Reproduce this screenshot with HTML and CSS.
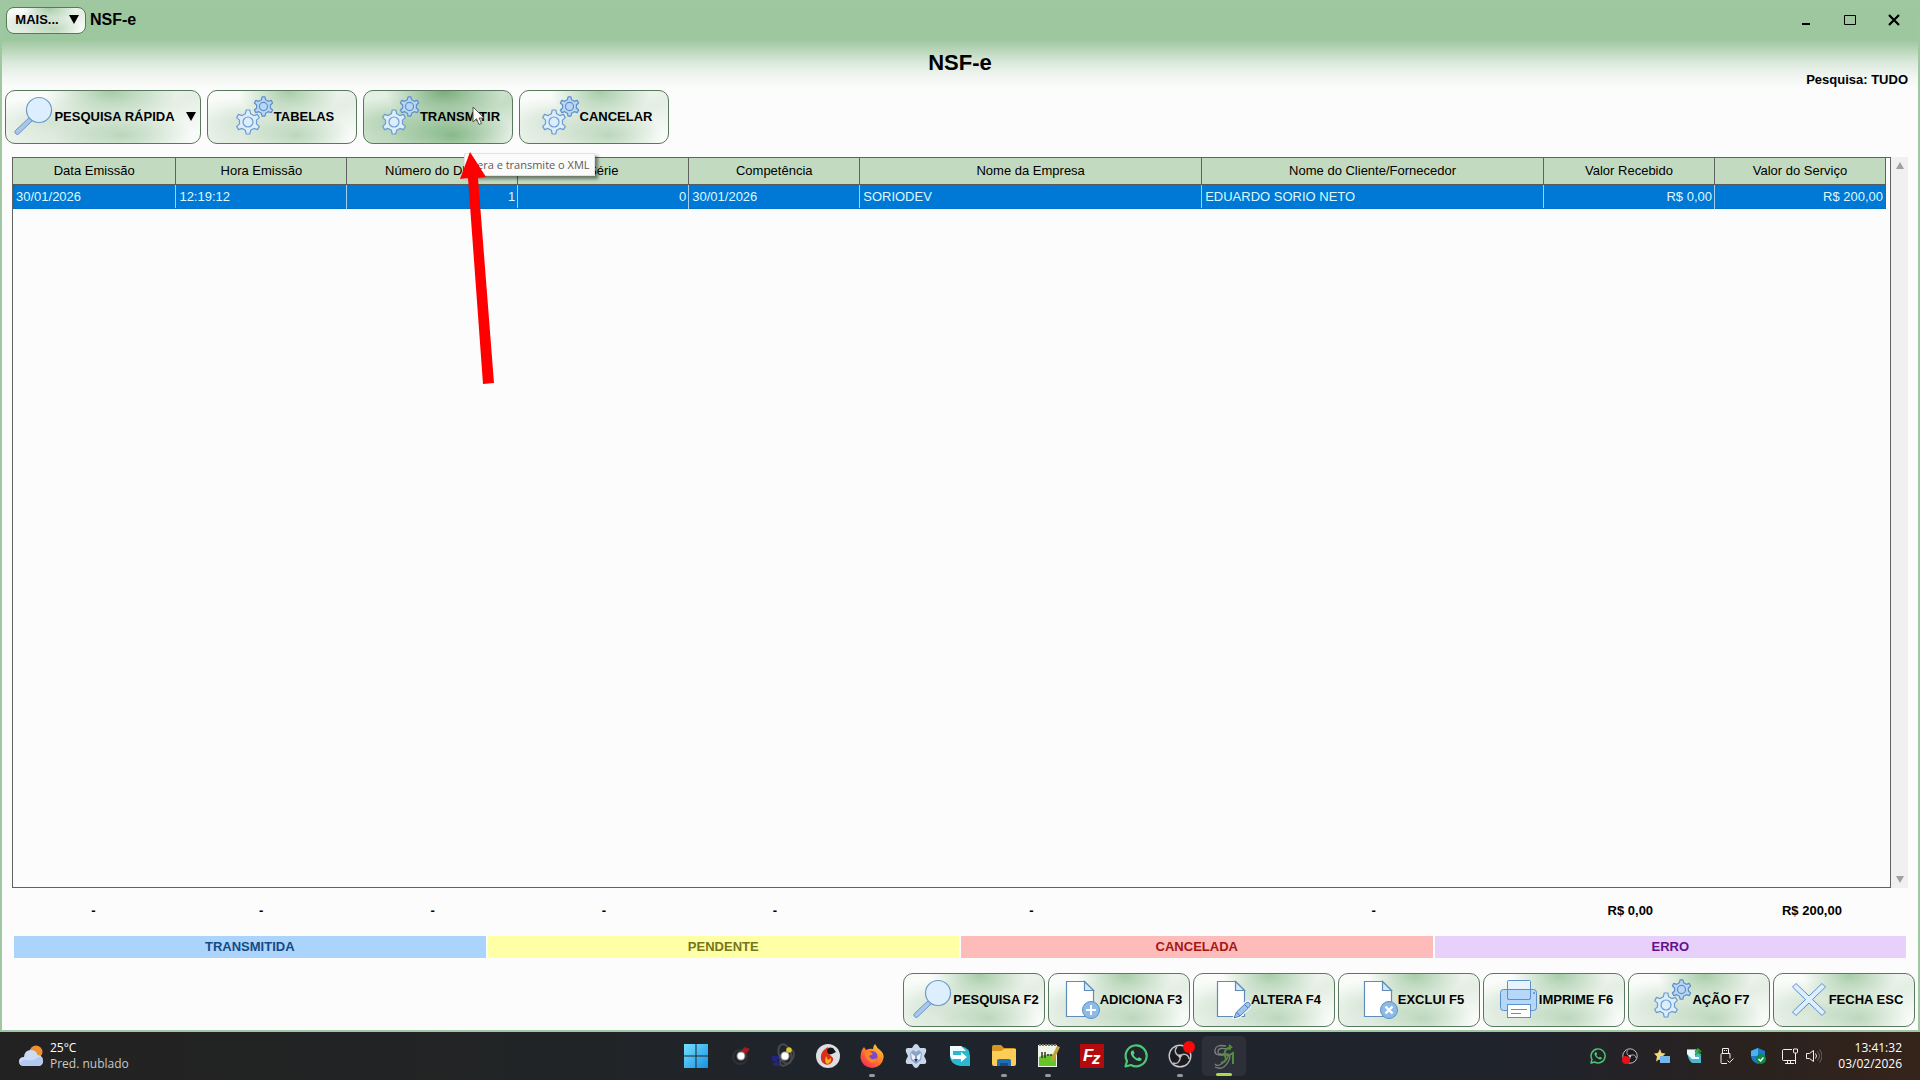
FILE: index.html
```html
<!DOCTYPE html>
<html lang="pt-BR">
<head>
    <meta charset="UTF-8">
    <meta name="viewport" content="width=device-width, initial-scale=1.0">
    <title>NSF-e</title>
    <link rel="stylesheet" href="styles.css">
</head>
<body>
    <!-- Shared icons -->
    <svg class="sprite" aria-hidden="true">
        <symbol id="gear" viewBox="-13 -13 26 26">
            <path d="M-2.6-8.3L-1.8-12H1.8L2.6-8.3L5.9-6.4L9.5-7.6L11.3-4.4L8.5-1.9V1.9L11.3 4.4L9.5 7.6L5.9 6.4L2.6 8.3L1.8 12H-1.8L-2.6 8.3L-5.9 6.4L-9.5 7.6L-11.3 4.4L-8.5 1.9V-1.9L-11.3-4.4L-9.5-7.6L-5.9-6.4Z" stroke-linejoin="round"/>
            <circle r="5"/>
        </symbol>
        <symbol id="gears" viewBox="0 0 44 40">
            <use href="#gear" x="5" y="13" width="26" height="26" fill="#dcedfc" stroke="#6c9cd0" stroke-width="1.2"/>
            <use href="#gear" x="23" y="0" width="21" height="21" fill="#b9d7f4" stroke="#5d8fca" stroke-width="1.5"/>
        </symbol>
        <symbol id="search" viewBox="0 0 44 40">
            <path d="M20.5 20.5L23.5 23.5L8.5 38Q7 39 5.5 37.5T5.5 34.5Z" fill="#a6c8ec" stroke="#6b93bf"/>
            <circle cx="29" cy="14" r="12.5" fill="#ddeefe" stroke="#6b9ac4" stroke-width="1.2"/>
        </symbol>
        <symbol id="file" viewBox="0 0 44 40">
            <path d="M10.5 2.5H28.5L37.5 11.5V37.5H10.5Z" fill="#fff" stroke="#5f8db8" stroke-width="1.2"/>
            <path d="M28.5 2.5V11.5H37.5Z" fill="#d5e8fb" stroke="#5f8db8" stroke-width="1.2"/>
        </symbol>
        <symbol id="whatsapp" viewBox="0 0 24 24">
            <path d="M1.5 22.5L3 17A10.5 10.5 0 1 1 7 21Z" fill="none" stroke="#4cc774" stroke-width="2.2" stroke-linejoin="round"/>
            <path d="M8 6.5C6 8 6.5 11 9.5 14S16 18 17.5 16L17.5 14.5L14.8 13.2L13.5 14.6C11.5 13.8 10.2 12.5 9.4 10.6L10.6 9.3L9.5 6.5Z" fill="#58cf80"/>
        </symbol>
        <symbol id="obs" viewBox="0 0 24 24">
            <circle cx="12" cy="12" r="10.8" fill="#1b1b1f" stroke="#c9c9cc" stroke-width="1.4"/>
            <path d="M12 12C7 11 6 6 9 3M12 12C16 8.5 21 11 21 15M12 12C13 17 9 21 5 19" fill="none" stroke="#b9b9bd" stroke-width="1.4"/>
            <circle cx="12" cy="12" r="1.8" fill="#c9c9cc"/>
        </symbol>
    </svg>

    <main class="window">
        <header class="titlebar">
            <button class="btn btn-more" type="button">MAIS... <span class="caret"></span></button>
            <span class="window-name">NSF-e</span>
            <div class="window-controls">
                <button type="button" aria-label="Minimizar"><svg width="12" height="12"><path d="M2 10h8" stroke="#000" stroke-width="2"/></svg></button>
                <button type="button" aria-label="Maximizar"><svg width="12" height="12"><path d="M.5 1.5h11v9H.5z" fill="none" stroke="#000"/></svg></button>
                <button type="button" aria-label="Fechar"><svg width="12" height="12"><path d="M1 1L11 11M11 1L1 11" stroke="#000" stroke-width="2.2"/></svg></button>
            </div>
        </header>

        <div class="heading">
            <h1>NSF-e</h1>
            <p>Pesquisa: TUDO</p>
        </div>

        <nav class="toolbar">
            <button class="btn btn-search" type="button"><svg class="icon"><use href="#search"/></svg>PESQUISA RÁPIDA<span class="caret"></span></button>
            <button class="btn" type="button"><svg class="icon"><use href="#gears"/></svg>TABELAS</button>
            <button class="btn active" type="button" aria-describedby="tip"><svg class="icon"><use href="#gears"/></svg>TRANSMITIR</button>
            <button class="btn" type="button"><svg class="icon"><use href="#gears"/></svg>CANCELAR</button>
        </nav>

        <section class="grid-area">
            <div class="grid-box">
                <table>
                    <colgroup>
                        <col class="col-date"><col class="col-std"><col class="col-std"><col class="col-std"><col class="col-std"><col class="col-wide"><col class="col-wide"><col class="col-std"><col class="col-std">
                    </colgroup>
                    <thead>
                        <tr>
                            <th>Data Emissão</th>
                            <th>Hora Emissão</th>
                            <th>Número do DPS</th>
                            <th>Série</th>
                            <th>Competência</th>
                            <th>Nome da Empresa</th>
                            <th>Nome do Cliente/Fornecedor</th>
                            <th>Valor Recebido</th>
                            <th>Valor do Serviço</th>
                        </tr>
                    </thead>
                    <tbody>
                        <tr class="selected">
                            <td>30/01/2026</td>
                            <td>12:19:12</td>
                            <td class="num">1</td>
                            <td class="num">0</td>
                            <td>30/01/2026</td>
                            <td>SORIODEV</td>
                            <td>EDUARDO SORIO NETO</td>
                            <td class="num">R$ 0,00</td>
                            <td class="num">R$ 200,00</td>
                        </tr>
                    </tbody>
                </table>
            </div>
            <div class="scrollbar"><span class="arrow-up"></span><span class="arrow-down"></span></div>
        </section>

        <div class="totals">
            <span>-</span><span>-</span><span>-</span><span>-</span><span>-</span><span>-</span><span>-</span><span>R$ 0,00</span><span>R$ 200,00</span>
        </div>

        <div class="legend">
            <span class="sent">TRANSMITIDA</span>
            <span class="pending">PENDENTE</span>
            <span class="canceled">CANCELADA</span>
            <span class="error">ERRO</span>
        </div>

        <div class="actions">
            <button class="btn" type="button"><svg class="icon"><use href="#search"/></svg>PESQUISA F2</button>
            <button class="btn" type="button">
                <svg class="icon"><use href="#file"/><circle cx="35" cy="31" r="8.5" fill="#8dbbe8" stroke="#5b8fc7"/><path d="M35 26v10M30 31h10" stroke="#fff" stroke-width="2"/></svg>ADICIONA F3
            </button>
            <button class="btn" type="button">
                <svg class="icon"><use href="#file"/><path d="M27 39L29.5 33L39.5 23.5Q41 22.5 42.5 24T43 27.5L33 37Z" fill="#9cc4ed" stroke="#fff" stroke-width="3"/><path d="M27 39L29.5 33L39.5 23.5Q41 22.5 42.5 24T43 27.5L33 37ZM29.5 33L33 37M37.5 25.5L41 29" fill="#9cc4ed" stroke="#4f7fb5"/></svg>ALTERA F4
            </button>
            <button class="btn" type="button">
                <svg class="icon"><use href="#file"/><circle cx="35" cy="31" r="8.5" fill="#8dbbe8" stroke="#5b8fc7"/><path d="M31.5 27.5l7 7M38.5 27.5l-7 7" stroke="#fff" stroke-width="2.4"/></svg>EXCLUI F5
            </button>
            <button class="btn" type="button">
                <svg class="icon" stroke="#5b8fc7"><rect x="5.5" y="10.5" width="36" height="21" rx="3" fill="#b4d7fa"/><rect x="12.5" y="1.5" width="23" height="19" rx="1" fill="#e7f3ff"/><path d="M12.5 10.5h23v8q0 2-2 2h-19q-2 0-2-2z" fill="#b4d7fa"/><rect x="12.5" y="25.5" width="23" height="13" fill="#fff"/><path d="M16 30.5h16M16 34.5h10"/><circle cx="39" cy="14" r=".5"/></svg>IMPRIME F6
            </button>
            <button class="btn" type="button"><svg class="icon"><use href="#gears"/></svg>AÇÃO F7</button>
            <button class="btn" type="button">
                <svg class="icon"><path d="M11 4.5L24 17L37 4.5L40.5 8L27.5 20.5L40.5 33L37 36.5L24 24L11 36.5L7.5 33L20.5 20.5L7.5 8Z" fill="#ddeffe" stroke="#5b8fc7"/></svg>FECHA ESC
            </button>
        </div>

        <!-- Hint over the grid -->
        <div class="tooltip" id="tip" role="tooltip">Gera e transmite o XML</div>
        <svg class="pointer-arrow" width="38" height="234" aria-hidden="true"><path d="M11 0L27 25L19 26L35 231L24 232L9 26L1 27Z" fill="#fe0000"/></svg>
        <svg class="cursor" width="14" height="20" aria-hidden="true"><path d="M1 1V16L4.5 12.8L7 18.5L9.5 17.4L7 12H12Z" fill="#fff" stroke="#555"/></svg>
    </main>

    <footer class="taskbar">
        <div class="weather">
            <svg width="26" height="22"><circle cx="18" cy="7" r="6.5" fill="#eb9130"/><path d="M6 21Q1 21 1 16.5T6 12Q6.5 5 13 5Q18 5 19.5 10Q25 10.5 25 15.5T20 21Z" fill="#ccdcf6"/><path d="M2 18Q5 14 10 15T19 13T25 16Q25 21 20 21H6Q3 21 2 18Z" fill="#b3c9ef"/></svg>
            <p>25°C<br><span>Pred. nublado</span></p>
        </div>

        <div class="apps">
            <a href="#" aria-label="Iniciar"><svg class="app-icon"><defs><linearGradient id="win" x2="1" y2="1"><stop stop-color="#75e0ff"/><stop offset="1" stop-color="#1590e4"/></linearGradient></defs><path d="M0 0h11.5v11.5H0zM12.5 0H24v11.5H12.5zM0 12.5h11.5V24H0zM12.5 12.5H24V24H12.5z" fill="url(#win)"/></svg></a>
            <a href="#" aria-label="Monitor"><svg class="app-icon"><circle cx="12" cy="13" r="7" fill="none" stroke="#303036" stroke-width="2"/><path d="M13 8L16 3L22 5L18 10Z" fill="#a81a20"/><circle cx="13" cy="12" r="4.5" fill="#8d8d90"/><circle cx="13" cy="12" r="3.4" fill="#fff"/></svg></a>
            <a href="#" aria-label="Banco de dados"><svg class="app-icon"><g fill="none" stroke="#484a4f" stroke-width="2"><ellipse cx="13" cy="10" rx="6" ry="10" transform="rotate(-20 13 10)"/><ellipse cx="15" cy="14" rx="5" ry="9" transform="rotate(40 15 14)"/></g><path d="M0 12h7v3H5v3h3v4H1v-3h2v-2H0z" fill="#23267c"/><circle cx="13" cy="12" r="4.5" fill="#a5a5a9"/><circle cx="13" cy="12" r="3.4" fill="#fff"/><circle cx="17" cy="6" r="2.8" fill="#d9cc28"/></svg></a>
            <a href="#" aria-label="Firebird"><svg class="app-icon"><circle cx="12" cy="12" r="12" fill="#dcdfe3"/><path d="M12 3C4 7 4 14 6 18Q9 22 14 20Q20 15 15 12Q12 9 14 7Z" fill="#d8301c"/><path d="M10 12Q8 18 11 20Q16 19 15 14L12 16Z" fill="#ffb01f"/><path d="M11 7Q12 2 17 4L20 8L16 10Q12 11 11 7Z" fill="#151515"/></svg></a>
            <a href="#" class="running" aria-label="Firefox"><svg class="app-icon"><defs><linearGradient id="fox" x1="1" x2=".2" y2="1"><stop stop-color="#ffe33f"/><stop offset=".45" stop-color="#ff8a24"/><stop offset="1" stop-color="#f32b58"/></linearGradient></defs><path d="M1 9Q2 5 4 3L6 6Q10 4 13 5Q13 2 15 0Q17 4 20 6Q24 9 23.5 14Q22 23 12 24Q2 23 .5 14Q.5 11 1 9Z" fill="url(#fox)"/><circle cx="12" cy="12.5" r="5.5" fill="#7848cf"/><path d="M5 9Q8 6 11 8L13 10L9 12Q11 17 17 14Q16 20 10 18Q5 15 5 9Z" fill="#ff8228"/></svg></a>
            <a href="#" aria-label="Engrenagem"><svg class="app-icon"><path d="M10 1Q12-1 14 1L16 4L20 4Q23 4 22 8L20 12L22 16Q23 20 20 20L16 20L14 23Q12 25 10 23L8 20L4 20Q1 20 2 16L4 12L2 8Q1 4 4 4L8 4Z" fill="#c9d7e9"/><path d="M6 9l3-3 3 2 3-2 3 3-1 7-5 4-5-4z" fill="#8ba4c8"/><path d="M7 9l4 3v5l-3-2zM17 9l-4 3v5l3-2z" fill="#e9f1fb"/><path d="M10 15h4l-2 3z" fill="#253e63"/></svg></a>
            <a href="#" aria-label="Transferência"><svg class="app-icon"><path d="M2 2H13Q22 4 22 12V22H12Q2 20 2 12Z" fill="#28b8cf"/><path d="M2 2H13L18 7H5V16Q2 14 2 11Z" fill="#eafcff"/><path d="M5 11h8V8l6 5-6 5v-3H5z" fill="#fff"/></svg></a>
            <a href="#" class="running" aria-label="Explorador de arquivos"><svg class="app-icon"><path d="M0 3q0-2 2-2h7l3 3h10q2 0 2 2v6H0z" fill="#d79620"/><path d="M0 7h9l3-2h12v15q0 2-2 2H2q-2 0-2-2z" fill="#fbce57"/><path d="M5 22v-5q0-2 2-2h10q2 0 2 2v5z" fill="#1f6fb7"/><path d="M8 19h8v3H8z" fill="#154f86"/></svg></a>
            <a href="#" class="running" aria-label="Notepad++"><svg class="app-icon"><path d="M2 1h19v22H2z" fill="#eef5e6"/><path d="M3 13q8-4 17-2v11H3z" fill="#69c42a"/><path d="M3 1h17" stroke="#777" stroke-width="2" stroke-dasharray="2 1"/><path d="M6 14V8M9 14V8M11 11h2M14 11h2" stroke="#333" stroke-width="1.5" fill="none"/><path d="M15 14L21 2l3 1-6 13-3 2z" fill="#c9a13b"/></svg></a>
            <a href="#" aria-label="FileZilla"><svg class="app-icon"><rect width="24" height="24" rx="1" fill="#b40a0e"/><text class="fz" x="3" y="17">F</text><text class="fz" x="12" y="20">z</text></svg></a>
            <a href="#" aria-label="WhatsApp"><svg class="app-icon"><use href="#whatsapp"/></svg></a>
            <a href="#" class="running" aria-label="OBS Studio"><svg class="app-icon"><use href="#obs"/><circle cx="21" cy="3" r="6" fill="#f90909"/></svg></a>
            <a href="#" class="running current" aria-label="NSF-e"><svg class="app-icon" fill="none"><path d="M14 2Q4 0 3 6T11 11T13 17T3 20M15 5Q7 3 6 7T13 10T16 18T3 23" stroke="#7b827c" stroke-width="1.3"/><path d="M9 19Q16 17 13 12Q11 5 19 3L17 1M19 3L17 6M16 12l5-3V20" stroke="#4f8e3b" stroke-width="2"/></svg></a>
        </div>

        <div class="tray">
            <svg class="tray-icon" viewBox="0 0 16 16"><use href="#whatsapp" width="16" height="16"/></svg>
            <svg class="tray-icon" viewBox="0 0 16 16"><use href="#obs" width="16" height="16"/><circle cx="4" cy="12" r="4" fill="#e80f16"/></svg>
            <svg class="tray-icon" viewBox="0 0 16 16"><path d="M6 1l1.500 4 4 .5-3 3 .5 5-4-2-3 2 1-5-3-3 4-.5z" fill="#f5d77a"/><path d="M6 8h10v7H6z" fill="#74b7ec"/></svg>
            <svg class="tray-icon" viewBox="0 0 16 16"><path d="M1 1h9l5 6v8H6q-5-4-5-14z" fill="#50b4cc"/><path d="M1 2h8v7h4v2H6L1 6z" fill="#eafaff"/><path d="M9 4l3-3 3 3M9 7l3-3 3 3" fill="none" stroke="#29a63c" stroke-width="1.5"/></svg>
            <svg class="tray-icon" viewBox="0 0 16 16" fill="none" stroke="#eee"><path d="M4.500 5.500v-5h6v5M9 15.500H4q-1 0-1-1v-8q0-1 1-1h8v5M6 2.500h1M8 2.500h1M9.500 12.500l2 2 4-4"/></svg>
            <svg class="tray-icon" viewBox="0 0 16 16"><path d="M8 0L15 3V8Q14 13 8 16Q1 13 1 8V3Z" fill="#187bcb"/><path d="M8 0L1 3V8H8Z" fill="#47b3f2"/><circle cx="11" cy="11" r="5" fill="#128846"/><path d="M8.500 11l2 2 3-3.500" fill="none" stroke="#fff" stroke-width="1.5"/></svg>
            <svg class="tray-icon" viewBox="0 0 16 16" fill="none" stroke="#eee"><path d="M10 1.500H1.500q-1 0-1 1v9q0 1 1 1H13M3 15.500h9M5.500 13v2M8.500 13v2M11.500 1v3q0 1 1 1h2q1 0 1-1V1zM13.500 5v11"/></svg>
            <svg class="tray-icon sound" viewBox="0 0 16 16" fill="none" stroke="#eee"><path d="M.5 5.500v5h3l4 3v-11l-4 3zM9.500 5.500q2 2.500 0 5"/><path d="M11.500 3.500q4 4.500 0 9M13.500 1.500q5 6.500 0 13" stroke="#6d635c"/></svg>
            <time>13:41:32<br>03/02/2026</time>
        </div>
    </footer>
</body>
</html>
```

FILE: styles.css
```css
:root {
    --green: #9fc7a1;
    --green-head: #c2dabf;
    --surface: #fbfcfb;
    --line: #5f625f;
    --blue: #0078d5;
}

* {
    margin: 0;
    padding: 0;
    box-sizing: border-box;
}

body {
    display: flex;
    flex-direction: column;
    min-height: 100vh;
    font-family: "Liberation Sans", Arial, sans-serif;
    font-size: 13px;
    color: #000;
}

.sprite {
    position: absolute;
    width: 0;
    height: 0;
}

.window {
    position: relative;
    flex: 1;
    display: flex;
    flex-direction: column;
    border: 2px solid var(--green);
    border-top: none;
    background: linear-gradient(#9fc7a1 0, #9dc79f 40px, #d9e8da 62px, #f1f5f1 76px, var(--surface) 88px);
}

/* Buttons */
.btn {
    display: flex;
    align-items: center;
    justify-content: center;
    width: 150px;
    height: 54px;
    padding-bottom: 2px;
    border: 1px solid #58795c;
    border-radius: 10px;
    background:
        radial-gradient(ellipse 34% 60% at 54% 0%, rgba(140, 188, 142, 0.75), transparent),
        radial-gradient(ellipse 36% 50% at 60% 85%, rgba(175, 208, 176, 0.8), transparent),
        radial-gradient(ellipse 40% 50% at 24% 60%, rgba(205, 224, 205, 0.8), transparent),
        linear-gradient(160deg, #fafcfa 20%, #e4eee3 60%, #f8fbf8 90%);
    font-family: inherit;
    font-size: 13px;
    font-weight: bold;
    color: #000;
    white-space: nowrap;
    cursor: pointer;
}

.btn.active {
    background:
        radial-gradient(ellipse 40% 60% at 54% 0%, rgba(108, 165, 111, 0.9), transparent),
        radial-gradient(ellipse 42% 55% at 60% 85%, rgba(128, 181, 130, 0.9), transparent),
        radial-gradient(ellipse 45% 50% at 22% 60%, rgba(170, 206, 171, 0.9), transparent),
        linear-gradient(160deg, #e5f0e5 20%, #c4dcc4 60%, #e8f1e8 90%);
}

.icon {
    width: 44px;
    height: 40px;
    flex: none;
}

.caret {
    border: 5px solid transparent;
    border-top: 9px solid #000;
    border-bottom: none;
}

/* Title */
.titlebar {
    display: flex;
    align-items: center;
    height: 40px;
    padding: 0 8px 0 4px;
}

.btn-more {
    width: 80px;
    height: 27px;
    padding-left: 2px;
    gap: 10px;
    border-radius: 8px;
}

.window-name {
    margin-left: 4px;
    font-size: 16px;
    font-weight: bold;
}

.window-controls {
    display: flex;
    gap: 12px;
    margin-left: auto;
}

.window-controls button {
    width: 32px;
    height: 32px;
    border: none;
    background: none;
    line-height: 0;
}

.heading {
    display: grid;
    grid-template-columns: 1fr auto 1fr;
    height: 50px;
    padding: 0 10px;
}

.heading h1 {
    grid-column: 2;
    font-size: 22px;
    line-height: 46px;
}

.heading p {
    align-self: end;
    justify-self: end;
    font-weight: bold;
    line-height: 20px;
}

.toolbar {
    display: flex;
    gap: 6px;
    padding: 0 3px;
}

.btn-search {
    width: 196px;
}

.btn-search .caret {
    margin-left: 11px;
}

/* Grid */
.grid-area {
    flex: 1;
    display: flex;
    margin: 13px 10px 0;
}

.grid-box {
    flex: 1;
    padding-right: 4px;
    border: 1px solid var(--line);
}

table {
    width: 100%;
    table-layout: fixed;
    border-collapse: collapse;
}

.col-date {
    width: 8.7%;
}

.col-std {
    width: 9.13%;
}

.col-wide {
    width: 18.26%;
}

th {
    height: 26px;
    border-right: 1px solid var(--line);
    border-bottom: 1px solid var(--line);
    background: var(--green-head);
    font-weight: normal;
}

.selected {
    background: var(--blue);
    color: #dcf8ff;
    outline: 1px dotted #6a4a50;
    outline-offset: -1px;
}

td {
    height: 25px;
    padding: 0 3px;
    border-right: 1px solid #a9cdea;
}

td:last-child {
    border-right-color: var(--line);
}

.num {
    padding: 0 2px;
    text-align: right;
}

.scrollbar {
    display: flex;
    flex-direction: column;
    align-items: center;
    justify-content: space-between;
    width: 17px;
    padding: 5px 0;
    background: #f0f0f0;
}

.arrow-up,
.arrow-down {
    border: 4px solid transparent;
}

.arrow-up {
    border-top: none;
    border-bottom: 7px solid #a0a0a0;
}

.arrow-down {
    border-bottom: none;
    border-top: 7px solid #a0a0a0;
}

.totals {
    display: grid;
    grid-template-columns: 163fr 172fr 171fr 171fr 171fr 342fr 342fr 171fr 192fr;
    height: 48px;
    margin: 0 10px;
    font-weight: bold;
    line-height: 46px;
    text-align: center;
}

.legend {
    display: grid;
    grid-template-columns: repeat(4, 1fr);
    gap: 2px;
    margin: 0 12px;
    font-weight: bold;
    line-height: 22px;
    text-align: center;
}

.sent {
    background: #aad4fb;
    color: #174a83;
}

.pending {
    background: #ffffa5;
    color: #76761c;
}

.canceled {
    background: #fdbcb9;
    color: #a51616;
}

.error {
    background: #e7d0fa;
    color: #66108c;
}

.actions {
    display: flex;
    justify-content: flex-end;
    gap: 3px;
    padding: 15px 3px 3px;
}

.actions .btn {
    width: 142px;
}

/* Floating hint */
.tooltip {
    position: absolute;
    top: 153px;
    left: 462px;
    padding: 0 4px;
    border: 1px solid #e3e3e3;
    background: #fbfbfb;
    box-shadow: 3px 3px 3px rgba(0, 0, 0, 0.45);
    font-family: "Open Sans", "Segoe UI", sans-serif;
    font-size: 11px;
    line-height: 21px;
    color: #5c5c5c;
}

.pointer-arrow {
    position: absolute;
    top: 152px;
    left: 457px;
}

.cursor {
    position: absolute;
    top: 106px;
    left: 470px;
}

/* Taskbar */
.taskbar {
    display: grid;
    grid-template-columns: 1fr auto 1fr;
    align-items: center;
    height: 48px;
    padding: 0 18px;
    background: linear-gradient(90deg, #222 0, #222425 24%, #1f242c 45%, #20232c 80%, #2b221e 92%, #35241a);
    font-family: "Open Sans", "Segoe UI", sans-serif;
    font-size: 12px;
    line-height: 16px;
    color: #fff;
}

.weather {
    display: flex;
    align-items: center;
    gap: 6px;
}

.weather span {
    color: #c8c8c8;
}

.apps {
    display: flex;
}

.apps a {
    position: relative;
    display: flex;
    align-items: center;
    justify-content: center;
    width: 44px;
    height: 48px;
}

.app-icon {
    width: 24px;
    height: 24px;
    overflow: visible;
}

.fz {
    fill: #fff;
    font: italic bold 17px "Liberation Sans", Arial, sans-serif;
}

.running::after {
    content: "";
    position: absolute;
    bottom: 3px;
    left: 19px;
    width: 6px;
    height: 3px;
    border-radius: 2px;
    background: #96989c;
}

.apps .current {
    height: 40px;
    margin: 4px 0;
    border-radius: 5px;
    background: #2d3038;
}

.current::after {
    bottom: 0;
    left: 14px;
    width: 16px;
    background: #a7dc4b;
}

.tray {
    display: flex;
    align-items: center;
    justify-content: flex-end;
    gap: 16px;
}

.tray-icon {
    width: 16px;
    height: 16px;
}

.sound {
    margin-left: -8px;
}

.tray time {
    text-align: right;
}
```
